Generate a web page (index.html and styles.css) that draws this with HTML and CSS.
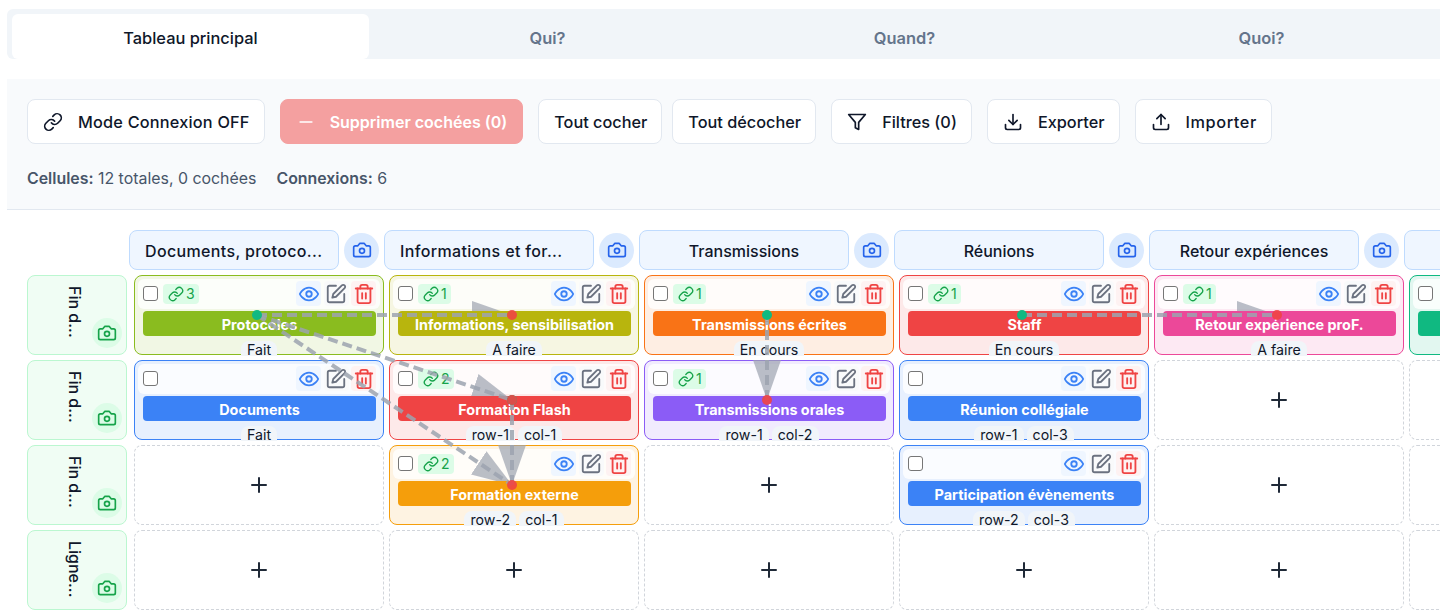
FILE: index.html
```html
<!DOCTYPE html>
<html lang="fr">

<head>
  <meta charset="UTF-8">
  <meta name="viewport" content="width=device-width, initial-scale=1.0">
  <title>Tableau principal</title>
  <link rel="stylesheet" href="styles.css">
</head>

<body>
  <svg class="sprite" aria-hidden="true">
    <symbol id="i-link" viewBox="0 0 24 24"><path d="M10 13a5 5 0 0 0 7.54.54l3-3a5 5 0 0 0-7.07-7.07l-1.72 1.71" /><path d="M14 11a5 5 0 0 0-7.54-.54l-3 3a5 5 0 0 0 7.07 7.07l1.71-1.71" /></symbol>
    <symbol id="i-minus" viewBox="0 0 24 24"><path d="M5 12h14" /></symbol>
    <symbol id="i-plus" viewBox="0 0 24 24"><path d="M5 12h14" /><path d="M12 5v14" /></symbol>
    <symbol id="i-filter" viewBox="0 0 24 24"><polygon points="22 3 2 3 10 12.46 10 19 14 21 14 12.46 22 3" /></symbol>
    <symbol id="i-download" viewBox="0 0 24 24"><path d="M21 15v4a2 2 0 0 1-2 2H5a2 2 0 0 1-2-2v-4" /><polyline points="7 10 12 15 17 10" /><line x1="12" y1="15" x2="12" y2="3" /></symbol>
    <symbol id="i-upload" viewBox="0 0 24 24"><path d="M21 15v4a2 2 0 0 1-2 2H5a2 2 0 0 1-2-2v-4" /><polyline points="17 8 12 3 7 8" /><line x1="12" y1="3" x2="12" y2="15" /></symbol>
    <symbol id="i-camera" viewBox="0 0 24 24"><path d="M14.5 4h-5L7 7H4a2 2 0 0 0-2 2v9a2 2 0 0 0 2 2h16a2 2 0 0 0 2-2V9a2 2 0 0 0-2-2h-3l-2.5-3z" /><circle cx="12" cy="13" r="3" /></symbol>
    <symbol id="i-eye" viewBox="0 0 24 24"><path d="M2 12s3-7 10-7 10 7 10 7-3 7-10 7-10-7-10-7Z" /><circle cx="12" cy="12" r="3" /></symbol>
    <symbol id="i-edit" viewBox="0 0 24 24"><path d="M12 3H5a2 2 0 0 0-2 2v14a2 2 0 0 0 2 2h14a2 2 0 0 0 2-2v-7" /><path d="M18.375 2.625a2.121 2.121 0 1 1 3 3L12 15l-4 1 1-4Z" /></symbol>
    <symbol id="i-trash" viewBox="0 0 24 24"><path d="M3 6h18" /><path d="M19 6v14c0 1-1 2-2 2H7c-1 0-2-1-2-2V6" /><path d="M8 6V4c0-1 1-2 2-2h4c1 0 2 1 2 2v2" /><line x1="10" y1="11" x2="10" y2="17" /><line x1="14" y1="11" x2="14" y2="17" /></symbol>
  </svg>

  <div class="tabs">
    <button class="tab active">Tableau principal</button>
    <button class="tab">Qui?</button>
    <button class="tab">Quand?</button>
    <button class="tab">Quoi?</button>
  </div>

  <section class="toolbar">
    <div class="actions">
      <button class="btn wide"><svg class="ico"><use href="#i-link" /></svg>Mode Connexion OFF</button>
      <button class="btn danger"><svg class="ico"><use href="#i-minus" /></svg>Supprimer cochées (0)</button>
      <div class="btn-pair">
        <button class="btn">Tout cocher</button>
        <button class="btn">Tout décocher</button>
      </div>
      <button class="btn"><svg class="ico"><use href="#i-filter" /></svg>Filtres (0)</button>
      <button class="btn"><svg class="ico"><use href="#i-download" /></svg>Exporter</button>
      <button class="btn wider"><svg class="ico"><use href="#i-upload" /></svg>Importer</button>
    </div>
    <div class="stats">
      <span><b>Cellules:</b> 12 totales, 0 cochées</span>
      <span><b>Connexions:</b> 6</span>
    </div>
  </section>

  <section class="board">
    <div class="col-heads">
      <div class="col-head"><div class="col-title cut">Documents, protoco...</div><button class="cam-blue"><svg class="ico"><use href="#i-camera" /></svg></button></div>
      <div class="col-head"><div class="col-title cut">Informations et for...</div><button class="cam-blue"><svg class="ico"><use href="#i-camera" /></svg></button></div>
      <div class="col-head"><div class="col-title">Transmissions</div><button class="cam-blue"><svg class="ico"><use href="#i-camera" /></svg></button></div>
      <div class="col-head"><div class="col-title">Réunions</div><button class="cam-blue"><svg class="ico"><use href="#i-camera" /></svg></button></div>
      <div class="col-head"><div class="col-title">Retour expériences</div><button class="cam-blue"><svg class="ico"><use href="#i-camera" /></svg></button></div>
      <div class="col-head"><div class="col-title"></div></div>
    </div>

    <!-- ligne 1 -->
    <div class="row">
      <div class="row-head"><span class="row-title">Fin d...</span><button class="cam-green"><svg class="ico"><use href="#i-camera" /></svg></button></div>

      <div class="cell lime">
        <div class="cell-top"><input type="checkbox"><span class="links"><svg><use href="#i-link" /></svg>3</span>
          <div class="tools"><button class="see"><svg><use href="#i-eye" /></svg></button><button class="edit"><svg><use href="#i-edit" /></svg></button><button class="del"><svg><use href="#i-trash" /></svg></button></div>
        </div>
        <div class="label">Protocoles</div>
        <div class="tags"><span>Fait</span></div>
      </div>

      <div class="cell olive">
        <div class="cell-top"><input type="checkbox"><span class="links"><svg><use href="#i-link" /></svg>1</span>
          <div class="tools"><button class="see"><svg><use href="#i-eye" /></svg></button><button class="edit"><svg><use href="#i-edit" /></svg></button><button class="del"><svg><use href="#i-trash" /></svg></button></div>
        </div>
        <div class="label">Informations, sensibilisation</div>
        <div class="tags"><span>A faire</span></div>
      </div>

      <div class="cell orange">
        <div class="cell-top"><input type="checkbox"><span class="links"><svg><use href="#i-link" /></svg>1</span>
          <div class="tools"><button class="see"><svg><use href="#i-eye" /></svg></button><button class="edit"><svg><use href="#i-edit" /></svg></button><button class="del"><svg><use href="#i-trash" /></svg></button></div>
        </div>
        <div class="label">Transmissions écrites</div>
        <div class="tags"><span>En cours</span></div>
      </div>

      <div class="cell red">
        <div class="cell-top"><input type="checkbox"><span class="links"><svg><use href="#i-link" /></svg>1</span>
          <div class="tools"><button class="see"><svg><use href="#i-eye" /></svg></button><button class="edit"><svg><use href="#i-edit" /></svg></button><button class="del"><svg><use href="#i-trash" /></svg></button></div>
        </div>
        <div class="label">Staff</div>
        <div class="tags"><span>En cours</span></div>
      </div>

      <div class="cell pink">
        <div class="cell-top"><input type="checkbox"><span class="links"><svg><use href="#i-link" /></svg>1</span>
          <div class="tools"><button class="see"><svg><use href="#i-eye" /></svg></button><button class="edit"><svg><use href="#i-edit" /></svg></button><button class="del"><svg><use href="#i-trash" /></svg></button></div>
        </div>
        <div class="label">Retour expérience proF.</div>
        <div class="tags"><span>A faire</span></div>
      </div>

      <div class="cell emerald">
        <div class="cell-top"><input type="checkbox"></div>
        <div class="label">&nbsp;</div>
      </div>
    </div>

    <!-- ligne 2 -->
    <div class="row">
      <div class="row-head"><span class="row-title">Fin d...</span><button class="cam-green"><svg class="ico"><use href="#i-camera" /></svg></button></div>

      <div class="cell blue">
        <div class="cell-top"><input type="checkbox">
          <div class="tools"><button class="see"><svg><use href="#i-eye" /></svg></button><button class="edit"><svg><use href="#i-edit" /></svg></button><button class="del"><svg><use href="#i-trash" /></svg></button></div>
        </div>
        <div class="label">Documents</div>
        <div class="tags"><span>Fait</span></div>
      </div>

      <div class="cell red">
        <div class="cell-top"><input type="checkbox"><span class="links"><svg><use href="#i-link" /></svg>2</span>
          <div class="tools"><button class="see"><svg><use href="#i-eye" /></svg></button><button class="edit"><svg><use href="#i-edit" /></svg></button><button class="del"><svg><use href="#i-trash" /></svg></button></div>
        </div>
        <div class="label">Formation Flash</div>
        <div class="tags"><span>row-1</span><span>col-1</span></div>
      </div>

      <div class="cell violet">
        <div class="cell-top"><input type="checkbox"><span class="links"><svg><use href="#i-link" /></svg>1</span>
          <div class="tools"><button class="see"><svg><use href="#i-eye" /></svg></button><button class="edit"><svg><use href="#i-edit" /></svg></button><button class="del"><svg><use href="#i-trash" /></svg></button></div>
        </div>
        <div class="label">Transmissions orales</div>
        <div class="tags"><span>row-1</span><span>col-2</span></div>
      </div>

      <div class="cell blue">
        <div class="cell-top"><input type="checkbox">
          <div class="tools"><button class="see"><svg><use href="#i-eye" /></svg></button><button class="edit"><svg><use href="#i-edit" /></svg></button><button class="del"><svg><use href="#i-trash" /></svg></button></div>
        </div>
        <div class="label">Réunion collégiale</div>
        <div class="tags"><span>row-1</span><span>col-3</span></div>
      </div>

      <button class="cell-add"><svg><use href="#i-plus" /></svg></button>
      <button class="cell-add"><svg><use href="#i-plus" /></svg></button>
    </div>

    <!-- ligne 3 -->
    <div class="row">
      <div class="row-head"><span class="row-title">Fin d...</span><button class="cam-green"><svg class="ico"><use href="#i-camera" /></svg></button></div>

      <button class="cell-add"><svg><use href="#i-plus" /></svg></button>

      <div class="cell amber">
        <div class="cell-top"><input type="checkbox"><span class="links"><svg><use href="#i-link" /></svg>2</span>
          <div class="tools"><button class="see"><svg><use href="#i-eye" /></svg></button><button class="edit"><svg><use href="#i-edit" /></svg></button><button class="del"><svg><use href="#i-trash" /></svg></button></div>
        </div>
        <div class="label">Formation externe</div>
        <div class="tags"><span>row-2</span><span>col-1</span></div>
      </div>

      <button class="cell-add"><svg><use href="#i-plus" /></svg></button>

      <div class="cell blue">
        <div class="cell-top"><input type="checkbox">
          <div class="tools"><button class="see"><svg><use href="#i-eye" /></svg></button><button class="edit"><svg><use href="#i-edit" /></svg></button><button class="del"><svg><use href="#i-trash" /></svg></button></div>
        </div>
        <div class="label">Participation évènements</div>
        <div class="tags"><span>row-2</span><span>col-3</span></div>
      </div>

      <button class="cell-add"><svg><use href="#i-plus" /></svg></button>
      <button class="cell-add"><svg><use href="#i-plus" /></svg></button>
    </div>

    <!-- ligne 4 -->
    <div class="row">
      <div class="row-head"><span class="row-title">Ligne...</span><button class="cam-green"><svg class="ico"><use href="#i-camera" /></svg></button></div>
      <button class="cell-add"><svg><use href="#i-plus" /></svg></button>
      <button class="cell-add"><svg><use href="#i-plus" /></svg></button>
      <button class="cell-add"><svg><use href="#i-plus" /></svg></button>
      <button class="cell-add"><svg><use href="#i-plus" /></svg></button>
      <button class="cell-add"><svg><use href="#i-plus" /></svg></button>
      <button class="cell-add"><svg><use href="#i-plus" /></svg></button>
    </div>

    <!-- fleches sous les labels, viewBox en coordonnees de la page -->
    <svg class="wires heads" viewBox="0 210 1440 404">
      <defs>
        <marker id="arrow" markerWidth="10" markerHeight="7" refX="10" refY="3.5" orient="auto">
          <polygon points="0 0, 10 3.5, 0 7" />
        </marker>
      </defs>
      <line x1="257" y1="315" x2="512" y2="315" />
      <line x1="257" y1="315" x2="512" y2="400" />
      <line x1="257" y1="315" x2="512" y2="485" />
      <line x1="512" y1="400" x2="512" y2="485" />
      <line x1="767" y1="315" x2="767" y2="400" />
      <line x1="1022" y1="315" x2="1277" y2="315" />
    </svg>

    <!-- traits et points au-dessus de tout -->
    <svg class="wires strokes" viewBox="0 210 1440 404">
      <line x1="257" y1="315" x2="512" y2="315" />
      <line x1="257" y1="315" x2="512" y2="400" />
      <line x1="257" y1="315" x2="512" y2="485" />
      <line x1="512" y1="400" x2="512" y2="485" />
      <line x1="767" y1="315" x2="767" y2="400" />
      <line x1="1022" y1="315" x2="1277" y2="315" />
      <circle class="from" cx="257" cy="315" r="5" />
      <circle class="from" cx="512" cy="400" r="5" />
      <circle class="from" cx="767" cy="315" r="5" />
      <circle class="from" cx="1022" cy="315" r="5" />
      <circle class="to" cx="512" cy="315" r="5" />
      <circle class="to" cx="512" cy="400" r="5" />
      <circle class="to" cx="512" cy="485" r="5" />
      <circle class="to" cx="767" cy="400" r="5" />
      <circle class="to" cx="1277" cy="315" r="5" />
    </svg>
  </section>
</body>

</html>
```

FILE: styles.css
```css
* {
  box-sizing: border-box;
}

html,
body {
  height: 614px;
}

body {
  margin: 0;
  width: 1440px;
  overflow: hidden;
  background: #fff;
  color: #0f172a;
  font-family: Inter, "Liberation Sans", sans-serif;
  font-size: 16px;
}

button {
  font-family: inherit;
  color: inherit;
  cursor: pointer;
}

.sprite {
  display: none;
}

svg {
  fill: none;
  stroke: currentColor;
  stroke-width: 2;
  stroke-linecap: round;
  stroke-linejoin: round;
}

.ico {
  width: 20px;
  height: 20px;
  flex: none;
}

/* onglets */
.tabs {
  display: flex;
  height: 50px;
  margin: 9px 0 0 7px;
  padding: 5px 0 0 5px;
  background: #f1f5f9;
  border-radius: 6px 0 0 6px;
}

.tab {
  width: 357px;
  padding: 2px 0 0;
  border: none;
  border-radius: 6px;
  background: none;
  color: #64748b;
  font-size: 16.4px;
  font-weight: 600;
}

.tab.active {
  background: #fff;
  color: #0f172a;
  font-weight: 500;
}

/* barre d'actions */
.toolbar {
  height: 131px;
  margin: 20px 0 0 7px;
  padding: 20px;
  background: #f8fafc;
  border-bottom: 1px solid #e2e8f0;
}

.actions {
  display: flex;
  gap: 15px;
}

.btn-pair {
  display: flex;
  gap: 10px;
}

.btn {
  display: flex;
  align-items: center;
  gap: 15px;
  height: 45px;
  padding: 1px 14px 0 15px;
  background: #fff;
  border: 1px solid #e2e8f0;
  border-radius: 8px;
  font-size: 16.3px;
  font-weight: 500;
  white-space: nowrap;
}

.btn.wide {
  letter-spacing: 0.2px;
}

.btn.wider {
  letter-spacing: 0.6px;
}

.btn.danger {
  gap: 14px;
  padding: 1px 15px 0;
  background: #f4a0a0;
  border-color: #f4a0a0;
  color: #fff;
  font-size: 16px;
  font-weight: 600;
}

.stats {
  display: flex;
  gap: 20px;
  margin-top: 25px;
  color: #475569;
  font-size: 15.9px;
  line-height: 20px;
}

.stats b {
  font-weight: 600;
}

/* tableau */
.board {
  position: relative;
  padding: 20px 0 0 27px;
}

.col-heads {
  display: flex;
  gap: 5px;
  height: 40px;
  margin-left: 102px;
}

.col-head {
  display: flex;
  flex: none;
  align-items: center;
  gap: 5px;
  width: 250px;
}

.col-title {
  flex: none;
  width: 210px;
  height: 40px;
  background: #eff6ff;
  border: 1px solid #bfdbfe;
  border-radius: 8px;
  font-weight: 500;
  line-height: 40px;
  text-align: center;
  white-space: nowrap;
}

.col-title.cut {
  padding-left: 15px;
  letter-spacing: 0.35px;
  text-align: left;
}

.cam-blue {
  display: flex;
  flex: none;
  align-items: center;
  justify-content: center;
  width: 35px;
  height: 35px;
  padding: 0;
  background: #dbeafe;
  border: none;
  border-radius: 50%;
  color: #2563eb;
}

.row {
  display: flex;
  gap: 5px;
  height: 80px;
  margin-top: 5px;
}

.row-head {
  position: relative;
  display: flex;
  flex: none;
  align-items: flex-start;
  justify-content: center;
  width: 100px;
  margin-right: 2px;
  padding: 10px 4px 0 0;
  background: #f0fdf4;
  border: 1px solid #bbf7d0;
  border-radius: 8px;
}

.row-title {
  font-weight: 500;
  white-space: nowrap;
  writing-mode: vertical-rl;
}

.cam-green {
  position: absolute;
  right: 4px;
  bottom: 6px;
  display: flex;
  align-items: center;
  justify-content: center;
  width: 30px;
  height: 30px;
  padding: 0;
  background: #dcfce7;
  border: none;
  border-radius: 50%;
  color: #16a34a;
}

/* cellules */
.cell {
  flex: none;
  width: 250px;
  padding: 3px 3px 0;
  background: color-mix(in srgb, var(--c) 12%, #fff);
  border: 1px solid var(--c);
  border-radius: 8px;
}

.lime { --c: #8abc1f; }
.olive { --c: #b8b50d; }
.orange { --c: #f97316; }
.red { --c: #ef4444; }
.pink { --c: #ec4899; }
.emerald { --c: #10b981; }
.blue { --c: #3b82f6; }
.violet { --c: #8b5cf6; }
.amber { --c: #f59e0b; }

.cell-top {
  display: flex;
  align-items: center;
  height: 30px;
  padding: 0 4px 1px 5px;
  background: rgba(255, 255, 255, 0.8);
  border-radius: 6px;
}

.cell-top input {
  flex: none;
  width: 15px;
  height: 15px;
  margin: 0;
  appearance: none;
  background: #fff;
  border: 1.5px solid #767676;
  border-radius: 3px;
}

.links {
  display: flex;
  align-items: center;
  gap: 2px;
  height: 20px;
  margin-left: 5px;
  padding: 0 4px 0 5px;
  background: #dcfce7;
  border-radius: 4px;
  color: #16a34a;
  font-size: 14px;
}

.links svg {
  width: 16px;
  height: 16px;
}

.tools {
  display: flex;
  gap: 2.5px;
  margin-left: auto;
}

.tools button {
  display: flex;
  align-items: center;
  justify-content: center;
  width: 25px;
  height: 25px;
  padding: 0;
  border: none;
  border-radius: 4px;
}

.tools svg {
  width: 22px;
  height: 22px;
}

.see {
  background: #eff6ff;
  color: #3b82f6;
}

.edit {
  background: #f9fafb;
  color: #6b7280;
}

.del {
  background: #fef2f2;
  color: #ef4444;
}

.label {
  position: relative;
  z-index: 2;
  height: 25px;
  margin: 2px 4px 0 5px;
  background: var(--c);
  border-radius: 4px;
  color: #fff;
  font-size: 14.4px;
  font-weight: 700;
  line-height: 27px;
  text-align: center;
  white-space: nowrap;
}

.tags {
  display: flex;
  justify-content: center;
  gap: 3px;
  margin-top: 5px;
}

.tags span {
  height: 15px;
  padding: 1px 6px 0;
  background: #f1f5f9;
  border-radius: 8px 8px 0 0;
  font-size: 14.2px;
  line-height: 16px;
}

.cell-add {
  display: flex;
  flex: none;
  align-items: center;
  justify-content: center;
  width: 250px;
  padding: 0;
  background: #fff;
  border: 1px dashed #d1d5db;
  border-radius: 8px;
  color: #1f2937;
}

.cell-add svg {
  width: 24px;
  height: 24px;
}

/* connexions par-dessus le tableau */
.wires {
  position: absolute;
  top: 0;
  left: 0;
  width: 1440px;
  height: 404px;
  pointer-events: none;
}

.heads {
  z-index: 1;
}

.strokes {
  z-index: 3;
}

.heads line {
  stroke: none;
  stroke-width: 4;
  marker-end: url(#arrow);
}

.heads polygon {
  fill: #9ca3af;
  fill-opacity: 0.7;
  stroke: none;
}

.strokes line {
  stroke: #9ca3af;
  stroke-width: 4;
  stroke-linecap: butt;
  stroke-dasharray: 10 5;
  stroke-opacity: 0.85;
}

.wires circle {
  stroke: none;
}

.wires .from {
  fill: #10b981;
}

.wires .to {
  fill: #ef4444;
  fill-opacity: 0.9;
}
```
